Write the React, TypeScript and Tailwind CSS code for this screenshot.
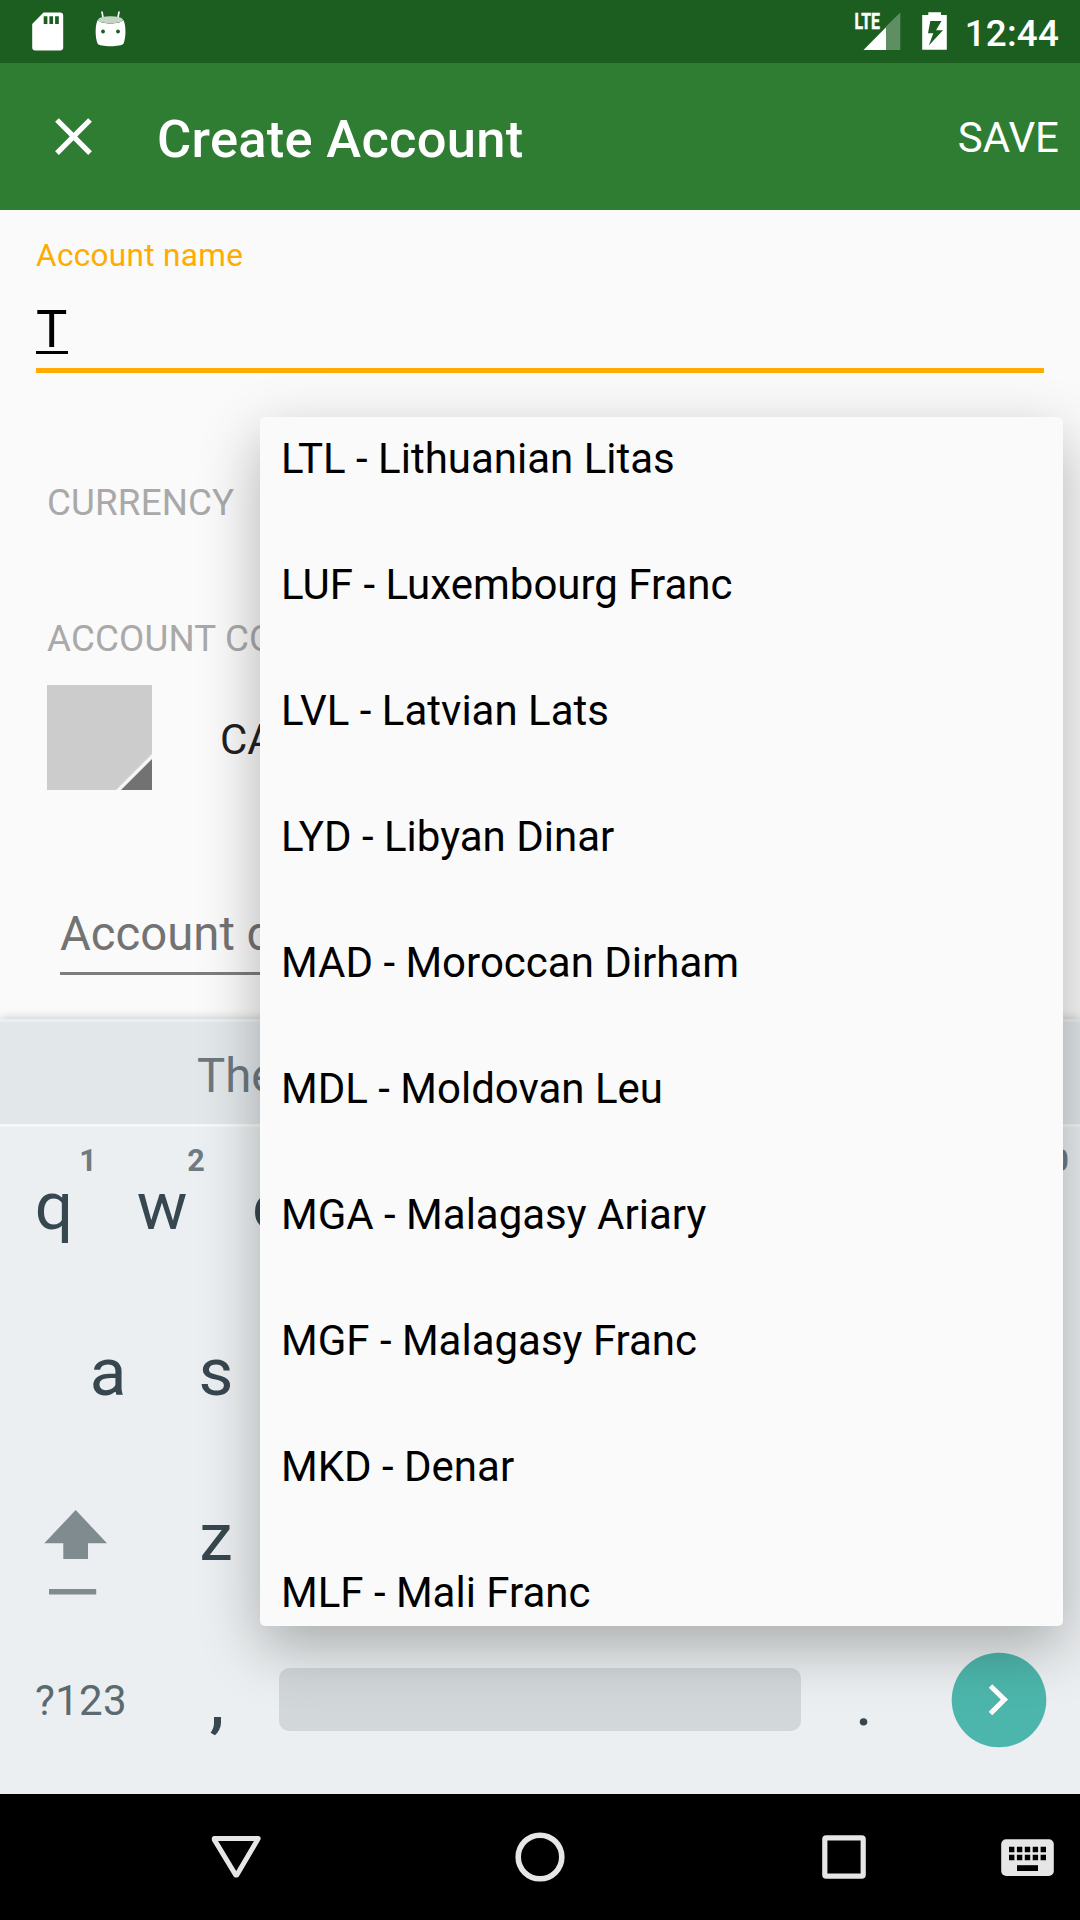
import React from "react";

const currencies = [
  "LTL - Lithuanian Litas",
  "LUF - Luxembourg Franc",
  "LVL - Latvian Lats",
  "LYD - Libyan Dinar",
  "MAD - Moroccan Dirham",
  "MDL - Moldovan Leu",
  "MGA - Malagasy Ariary",
  "MGF - Malagasy Franc",
  "MKD - Denar",
  "MLF - Mali Franc",
];

function StatusBar() {
  return (
    <header className="flex h-[63px] items-center bg-[#1b5e20] pr-[21px] pl-8 text-white">
      <svg className="h-[63px] w-8" viewBox="0 0 32 63">
        <path
          fill="#fff"
          fillRule="evenodd"
          d="M11.5 12.5H28a3.2 3.2 0 0 1 3.2 3.2V47.3A3.2 3.2 0 0 1 28 50.5H3.4A3.2 3.2 0 0 1 .2 47.3V24ZM11.7 16.3V24H15.4V16.3ZM17.4 16.3V24H21.1V16.3ZM23.1 16.3V24H26.8V16.3Z"
        />
      </svg>
      <svg className="ml-[31px] h-[63px] w-8" viewBox="95 0 32 63">
        <path stroke="#fff" strokeWidth="1.6" strokeLinecap="round" d="M102 12l1.3 7M119 12l-1.3 7" />
        <path
          fill="#fff"
          d="M97.8 20c4 4.800 21.500 4.800 25.500 0c2.700 4 3 17 .2 23.500c-1.500 3.600-24.400 3.600-25.900 0c-2.800-6.500-2.500-19.500.2-23.500Z"
        />
        <ellipse cx="110.500" cy="19.800" rx="12.400" ry="3.500" fill="#c3d5c5" />
        <circle cx="103" cy="31.500" r="1.900" fill="#1b5e20" />
        <circle cx="118" cy="31.500" r="1.900" fill="#1b5e20" />
      </svg>
      <svg className="ml-auto h-[63px] w-[48px]" viewBox="853 0 48 63">
        <path fill="#fff" fillOpacity=".3" d="M900.300 12.500V50H886V26.500Z" />
        <path fill="#fff" d="M886 27.300V50H863.500Z" />
        <text
          x="854.500"
          y="29.200"
          fill="#fff"
          stroke="#fff"
          strokeWidth="0.500"
          textLength="25.500"
          lengthAdjust="spacingAndGlyphs"
          className="font-['Roboto'] text-[22px] font-bold"
        >
          LTE
        </text>
      </svg>
      <svg className="ml-[21px] h-[63px] w-[25px]" viewBox="922 0 25 63">
        <path
          fill="#fff"
          fillRule="evenodd"
          d="M928.300 12.200H941V15H946.800V49.800H922.200V15H928.300ZM930.300 21L928 33.300H933.300L928.800 45.500L943 30.300H936L941.500 21Z"
        />
      </svg>
      <span className="ml-[18px] pt-[4px] text-[36.75px] font-medium tracking-[0.2px]">12:44</span>
    </header>
  );
}

function AppBar() {
  return (
    <div className="flex h-[147px] items-center bg-[#2e7d32] pr-[21px] pl-[42px] text-white">
      <svg className="size-[63px]" viewBox="0 0 24 24" fill="#fff">
        <path d="M19 6.410 17.590 5 12 10.590 6.410 5 5 6.410 10.590 12 5 17.590 6.410 19 12 13.410 17.590 19 19 17.590 13.410 12z" />
      </svg>
      <h1 className="ml-[52px] pt-1 text-[52.5px] leading-[60px] font-medium tracking-[0.27px]">Create Account</h1>
      <span className="ml-auto pt-0.5 text-[42px] leading-[50px]">SAVE</span>
    </div>
  );
}

function Form() {
  return (
    <main className="flex h-[809px] flex-col overflow-hidden bg-[#fafafa] pt-[26px]">
      <div className="mx-9 flex flex-col">
        <label className="h-10 text-[31.5px] leading-[40px] tracking-[0.33px] text-[#ffab00]">Account name</label>
        <div className="mt-[23px] h-[74px] border-b-[5px] border-[#ffab00] text-[52.5px] leading-[60px] text-black">
          <span className="inline-block h-[55px] w-8 border-b-[3px] border-black">T</span>
        </div>
      </div>
      <div className="mt-[108px] ml-[47px] h-11 text-[36.75px] leading-[44px] tracking-[0.15px] text-[#a9a9a9]">CURRENCY</div>
      <div className="mt-[92px] ml-[47px] h-11 text-[36.75px] leading-[44px] tracking-[0.15px] text-[#a9a9a9]">
        ACCOUNT COLOR
      </div>
      <div className="mt-[24px] ml-[47px] flex h-[105px] items-center">
        <svg className="size-[105px]" viewBox="0 0 105 105">
          <path fill="#ccc" d="M0 0H105V105H0z" />
          <path fill="#f5f5f5" d="M105 69V105H69z" />
          <path fill="#727272" d="M105 74V105H74z" />
        </svg>
        <span className="ml-[68px] pt-1 text-[42px] leading-[50px] text-[#212121]">CASH</span>
      </div>
      <div className="mt-[116px] mr-[60px] ml-[60px] h-[69px] border-b-[3px] border-[#7d7d7d] text-[47.25px] leading-[56px] text-[#737373]">
        Account description
      </div>
    </main>
  );
}

function Key({ label, hint }: { label?: string; hint?: string }) {
  return (
    <div className="relative w-[108px] text-center">
      {label}
      {hint && (
        <span className="absolute top-[16px] right-[10px] w-[20px] text-center text-[30.5px] leading-[36px] font-bold text-[#6f7b81]">
          {hint}
        </span>
      )}
    </div>
  );
}

function Keyboard() {
  return (
    <section className="flex h-[775px] flex-col bg-[#eceff1] pt-[3px] text-[67.5px] text-[#37474f] shadow-[0_0_10px_rgba(0,0,0,0.22)]">
      <div className="flex h-[105px] items-center border-b-[3px] border-[#f5f7f8] bg-[#e2e7ea] pt-1.5 pl-[197px] text-[47.25px] text-[#6d787e]">
        The
      </div>
      <div className="flex h-[162px] leading-[158px]">
        <Key label="q" hint="1" />
        <Key label="w" hint="2" />
        <Key label="e" />
        <div className="grow" />
        <Key hint="0" />
      </div>
      <div className="flex h-[165px] pl-[54px] leading-[165px]">
        <Key label="a" />
        <Key label="s" />
      </div>
      <div className="flex h-[165px] leading-[166px]">
        <svg className="h-[165px] w-[162px]" viewBox="0 1454 162 165" fill="#808b8f">
          <path d="M75.700 1510L107 1543.300H88V1559H63.300V1543.300H44.300ZM49 1589H96.200V1594.500H49Z" />
        </svg>
        <Key label="z" />
      </div>
      <div className="flex h-[165px] items-center">
        <span className="-mt-[3px] w-[126px] pl-[35px] text-[42px] tracking-[0.3px] whitespace-nowrap text-[#5b6a70]">
          ?123
        </span>
        <span className="ml-[37px] w-[108px] text-center font-medium">,</span>
        <div className="-mt-1 ml-[8px] h-[63px] w-[522px] rounded-[10px] bg-[#d2d7d9]" />
        <span className="ml-[9px] w-[108px] text-center">.</span>
        <svg className="-mt-1 ml-[33px] size-[96px]" viewBox="951 1652 96 96">
          <circle cx="999" cy="1700" r="47.300" fill="#4db6ac" />
          <path fill="none" stroke="#fff" strokeWidth="5" d="M990.500 1686L1004.500 1699.600L990.500 1713.500" />
        </svg>
      </div>
    </section>
  );
}

function NavBar() {
  return (
    <nav className="flex h-[126px] items-center bg-black pl-[206px]">
      <svg className="size-[60px]" viewBox="206 1827 60 60">
        <path
          fill="none"
          stroke="#e6e6e6"
          strokeWidth="5"
          strokeLinejoin="round"
          d="M214.300 1838.600H258.200L236.800 1875H235.700L214.300 1839.600Z"
        />
      </svg>
      <svg className="ml-[244px] size-[60px]" viewBox="510 1827 60 60">
        <circle cx="540" cy="1857" r="21.800" fill="none" stroke="#e6e6e6" strokeWidth="5.600" />
      </svg>
      <svg className="ml-[244px] size-[60px]" viewBox="814 1827 60 60">
        <rect x="824.800" y="1837.800" width="38.400" height="38.400" rx="1.500" fill="none" stroke="#e6e6e6" strokeWidth="5.200" />
      </svg>
      <svg className="ml-[124px] size-[60px]" viewBox="998 1827 60 60">
        <rect x="1001.200" y="1839.200" width="52.600" height="36.800" rx="5" fill="#e6e6e6" />
        <path
          stroke="#000"
          strokeWidth="5.400"
          strokeDasharray="5.400 2.500"
          d="M1009 1849.500H1046.500M1009 1857.500H1046.500"
        />
        <path fill="#000" d="M1017 1865.200H1038V1871H1017z" />
      </svg>
    </nav>
  );
}

function CurrencyMenu() {
  return (
    <ul className="absolute top-[417px] left-[260px] h-[1209px] w-[803px] overflow-hidden rounded-[5px] bg-[#fafafa] text-black shadow-[0_21px_60px_rgba(0,0,0,0.29)]">
      {currencies.map((name) => (
        <li key={name} className="relative -top-[21px] h-[126px] pl-[21px] text-[42px] leading-[126px]">
          {name}
        </li>
      ))}
    </ul>
  );
}

export default function App() {
  return (
    <div className="relative h-[1920px] w-[1080px] overflow-hidden bg-[#fafafa] font-['Roboto',sans-serif]">
      <StatusBar />
      <AppBar />
      <Form />
      <Keyboard />
      <CurrencyMenu />
      <NavBar />
    </div>
  );
}
